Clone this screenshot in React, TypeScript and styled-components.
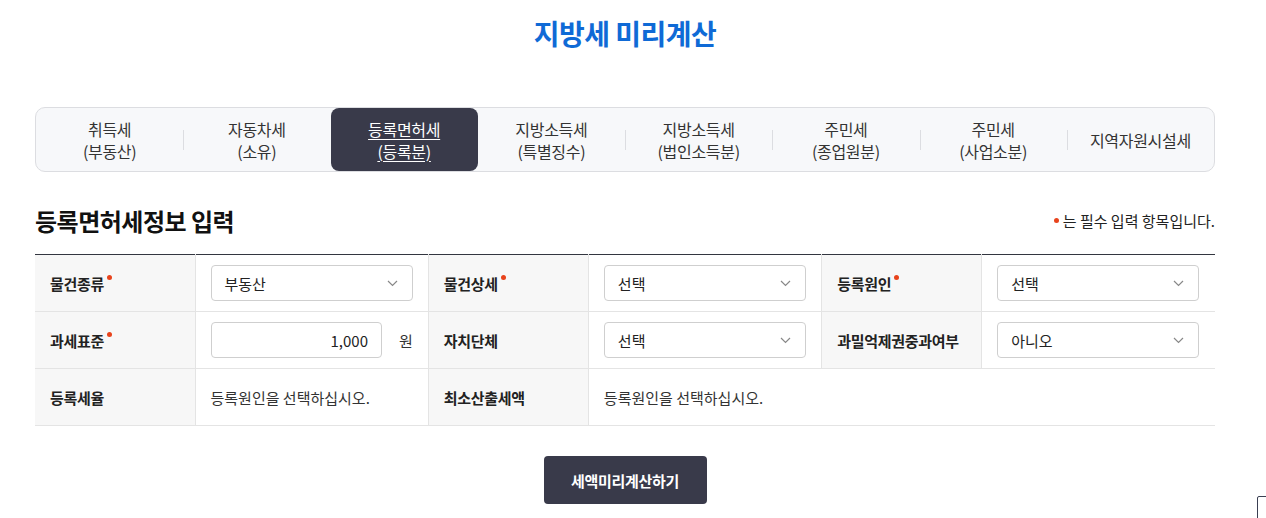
import React from 'react';
import styled, { createGlobalStyle } from 'styled-components';

const GlobalStyle = createGlobalStyle`
  html, body {
    margin: 0;
    padding: 0;
    background: #fff;
    font-family: 'Noto Sans CJK KR', 'Noto Sans', sans-serif;
    color: #222;
  }
  * { box-sizing: border-box; }
`;

const Page = styled.div`
  width: 1180px;
  margin-left: 35px;
  padding-top: 14px;
`;

const Title = styled.h1`
  margin: 0;
  text-align: center;
  font-size: 28px;
  font-weight: 700;
  color: #0f6ad6;
  line-height: 38px;
  letter-spacing: -0.5px;
`;

const Tabs = styled.ul`
  list-style: none;
  margin: 55px 0 0;
  padding: 0;
  display: grid;
  grid-template-columns: repeat(8, 1fr);
  height: 65px;
  border: 1px solid #dcdde1;
  border-radius: 10px;
  background: #f7f8fa;
`;

const Tab = styled.li<{ active?: boolean; divider?: boolean }>`
  position: relative;
  display: flex;
  align-items: center;
  justify-content: center;
  text-align: center;
  font-size: 16px;
  line-height: 22px;
  letter-spacing: -0.3px;
  color: ${(p) => (p.active ? '#fff' : '#333')};
  background: ${(p) => (p.active ? '#393a4a' : 'transparent')};
  border-radius: ${(p) => (p.active ? '8px' : '0')};
  text-decoration: ${(p) => (p.active ? 'underline' : 'none')};
  text-underline-offset: 3px;

  ${(p) =>
    p.divider &&
    `&::before {
      content: '';
      position: absolute;
      left: 0;
      top: 22px;
      height: 20px;
      border-left: 1px solid #dcdde1;
    }`}
`;

const SectionHead = styled.div`
  display: flex;
  align-items: flex-end;
  justify-content: space-between;
  margin-top: 32px;
  padding-bottom: 16px;
`;

const SectionTitle = styled.h2`
  margin: 0;
  font-size: 24px;
  font-weight: 700;
  color: #111;
  line-height: 34px;
  letter-spacing: -0.5px;
`;

const Note = styled.p`
  margin: 0 0 7px;
  font-size: 15px;
  color: #222;
  display: flex;
  align-items: center;
  gap: 4px;
`;

const Dot = styled.span`
  display: inline-block;
  width: 5px;
  height: 5px;
  border-radius: 50%;
  background: #e8431c;
  vertical-align: top;
`;

const Table = styled.table`
  width: 100%;
  border-collapse: collapse;
  border-top: 1px solid #333640;
  table-layout: fixed;
`;

const Label = styled.th`
  height: 57px;
  background: #f7f7f7;
  border-bottom: 1px solid #e4e4e4;
  border-right: 1px solid #e4e4e4;
  border-left: 1px solid #e4e4e4;
  text-align: left;
  padding: 0 0 0 15px;
  font-size: 15px;
  font-weight: 700;
  letter-spacing: -0.3px;
  color: #222;
  &:first-child { border-left: none; }
`;

const Required = styled(Dot)`
  margin: 2px 0 0 3px;
`;

const Cell = styled.td`
  height: 57px;
  border-bottom: 1px solid #e4e4e4;
  padding: 0 15px;
  font-size: 15px;
  color: #333;
`;

const SelectBox = styled.div`
  width: 202px;
  height: 36px;
  border: 1px solid #cfcfcf;
  border-radius: 4px;
  background: #fff;
  display: flex;
  align-items: center;
  justify-content: space-between;
  padding: 0 14px 0 13px;
  font-size: 15px;
  color: #222;
`;

const InputRow = styled.div`
  display: flex;
  align-items: center;
  gap: 17px;
`;

const NumberInput = styled.div`
  width: 173px;
  height: 36px;
  border: 1px solid #cfcfcf;
  border-radius: 4px;
  display: flex;
  align-items: center;
  justify-content: flex-end;
  padding: 0 13px;
  font-size: 15px;
  color: #222;
`;

const ButtonWrap = styled.div`
  display: flex;
  justify-content: center;
  margin-top: 30px;
`;

const Button = styled.button`
  width: 163px;
  height: 48px;
  border: none;
  border-radius: 4px;
  background: #393a4a;
  color: #fff;
  font-family: inherit;
  font-size: 15px;
  font-weight: 700;
  letter-spacing: -0.3px;
`;

const TopButton = styled.div`
  position: fixed;
  left: 1257px;
  top: 496px;
  width: 50px;
  height: 50px;
  border: 1px solid #3a3f52;
  border-radius: 2px 0 0 0;
  background: #fff;
`;

const Chevron = () => (
  <svg width="11" height="7" viewBox="0 0 11 7" fill="none">
    <path d="M1 1l4.5 4.5L10 1" stroke="#888" strokeWidth="1.2" />
  </svg>
);

const Select = ({ value }: { value: string }) => (
  <SelectBox>
    <span>{value}</span>
    <Chevron />
  </SelectBox>
);

const tabs = [
  ['취득세', '(부동산)'],
  ['자동차세', '(소유)'],
  ['등록면허세', '(등록분)'],
  ['지방소득세', '(특별징수)'],
  ['지방소득세', '(법인소득분)'],
  ['주민세', '(종업원분)'],
  ['주민세', '(사업소분)'],
  ['지역자원시설세'],
];

export default function App() {
  const active = 2;
  return (
    <>
      <GlobalStyle />
      <Page>
        <Title>지방세 미리계산</Title>
        <Tabs>
          {tabs.map((t, i) => (
            <Tab key={i} active={i === active} divider={i > 0 && i !== active && i !== active + 1}>
              <span>
                {t[0]}
                {t[1] && (
                  <>
                    <br />
                    {t[1]}
                  </>
                )}
              </span>
            </Tab>
          ))}
        </Tabs>

        <SectionHead>
          <SectionTitle>등록면허세정보 입력</SectionTitle>
          <Note>
            <Dot />는 필수 입력 항목입니다.
          </Note>
        </SectionHead>

        <Table>
          <colgroup>
            <col style={{ width: 160 }} />
            <col />
            <col style={{ width: 160 }} />
            <col />
            <col style={{ width: 160 }} />
            <col />
          </colgroup>
          <tbody>
            <tr>
              <Label>
                물건종류<Required />
              </Label>
              <Cell>
                <Select value="부동산" />
              </Cell>
              <Label>
                물건상세<Required />
              </Label>
              <Cell>
                <Select value="선택" />
              </Cell>
              <Label>
                등록원인<Required />
              </Label>
              <Cell>
                <Select value="선택" />
              </Cell>
            </tr>
            <tr>
              <Label>
                과세표준<Required />
              </Label>
              <Cell>
                <InputRow>
                  <NumberInput>1,000</NumberInput>
                  <span>원</span>
                </InputRow>
              </Cell>
              <Label>자치단체</Label>
              <Cell>
                <Select value="선택" />
              </Cell>
              <Label>과밀억제권중과여부</Label>
              <Cell>
                <Select value="아니오" />
              </Cell>
            </tr>
            <tr>
              <Label>등록세율</Label>
              <Cell>등록원인을 선택하십시오.</Cell>
              <Label>최소산출세액</Label>
              <Cell colSpan={3}>등록원인을 선택하십시오.</Cell>
            </tr>
          </tbody>
        </Table>

        <ButtonWrap>
          <Button>세액미리계산하기</Button>
        </ButtonWrap>
      </Page>
      <TopButton />
    </>
  );
}
